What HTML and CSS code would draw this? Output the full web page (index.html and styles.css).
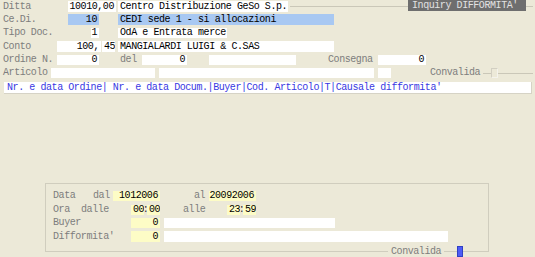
FILE: index.html
```html
<!DOCTYPE html>
<html>
<head>
<meta charset="utf-8">
<link rel="stylesheet" href="styles.css">
</head>
<body>
<div class="top">
  <div class="row r1">
    <span class="lbl w65">Ditta</span>
    <span class="fld num w48">10010,00</span>
    <span class="fld w170 ml2">Centro Distribuzione GeSo S.p.</span>
    <div class="frame">
      <span class="hline grow"></span>
      <span class="title">Inquiry DIFFORMITA'</span>
      <span class="hline w7"></span>
    </div>
  </div>
  <div class="row r2">
    <span class="lbl w65">Ce.Di.</span>
    <span class="fld blue num w31">10</span>
    <span class="fld blue w216 ml19">CEDI sede 1 - si allocazioni</span>
  </div>
  <div class="row r3">
    <span class="lbl w88">Tipo Doc.</span>
    <span class="fld num w8">1</span>
    <span class="fld w109 ml19">OdA e Entrata merce</span>
  </div>
  <div class="row r4">
    <span class="lbl w54">Conto</span>
    <span class="fld num w44">100,</span>
    <span class="fld w13 ml1">45</span>
    <span class="fld w216 ml3">MANGIALARDI LUIGI &amp; C.SAS</span>
  </div>
  <div class="row r5">
    <span class="lbl w54">Ordine N.</span>
    <span class="fld num w42">0</span>
    <span class="lbl w22 ml21">del</span>
    <span class="fld num w45">0</span>
    <span class="fld w87 ml22"></span>
    <span class="lbl w50 ml32">Consegna</span>
    <span class="fld num w48">0</span>
  </div>
  <div class="row r6">
    <span class="lbl w48">Articolo</span>
    <span class="fld w104"></span>
    <span class="fld w215 ml4"></span>
    <span class="fld w13 ml4"></span>
    <span class="lbl w53 ml39">Convalida</span>
    <span class="hline w8"></span>
    <span class="chk"></span>
    <span class="hline grow mr2"></span>
  </div>
  <div class="header">Nr. e data Ordine| Nr. e data Docum.|Buyer|Cod. Articolo|T|Causale difformita'</div>
</div>

<div class="group">
  <div class="row g1">
    <span class="lbl w40 ml7">Data</span>
    <span class="lbl w20">dal</span>
    <span class="fld yel num w47">1012006</span>
    <span class="lbl w15 ml34">al</span>
    <span class="fld yel num w47">20092006</span>
  </div>
  <div class="row g2">
    <span class="lbl w28 ml7">Ora</span>
    <span class="lbl w50">dalle</span>
    <span class="fld yel w13">00</span>
    <span class="colon">:</span>
    <span class="fld yel w13">00</span>
    <span class="lbl w44 ml23">alle</span>
    <span class="fld yel w13">23</span>
    <span class="colon">:</span>
    <span class="fld yel w13">59</span>
  </div>
  <div class="row g3">
    <span class="lbl w78 ml7">Buyer</span>
    <span class="fld yel num w29">0</span>
    <span class="fld w171 ml4"></span>
  </div>
  <div class="row g4">
    <span class="lbl w78 ml7">Difformita'</span>
    <span class="fld yel num w29">0</span>
    <span class="fld w284 ml4"></span>
  </div>
  <div class="legend">
    <span class="legend-text">Convalida</span>
    <span class="bluebox"></span>
  </div>
</div>
</body>
</html>
```

FILE: styles.css
```css
html, body {
  margin: 0;
  padding: 0;
  background: #ece9d8;
}
body {
  width: 535px;
  height: 257px;
  overflow: hidden;
  font-family: "Liberation Mono", "DejaVu Sans Mono", monospace;
  font-size: 10px;
  letter-spacing: -0.43px;
  color: #000;
}
.row {
  display: flex;
  align-items: stretch;
  height: 11px;
  line-height: 11px;
  white-space: nowrap;
}
.r1 { margin-top: 1px; }
.r2 { margin-top: 2px; }
.r3 { margin-top: 3px; height: 10px; line-height: 10px; }
.r4 { margin-top: 3px; }
.r5 { margin-top: 3px; height: 10px; line-height: 10px; }
.r6 { margin-top: 3px; height: 10px; line-height: 10px; }

.lbl {
  color: #7d7d7d;
  flex: none;
}
.row > .lbl:first-child:not([class*="ml"]) { margin-left: 3px; }
.fld {
  flex: none;
  background: #fff;
  overflow: hidden;
  padding-left: 2px;
  box-sizing: border-box;
}
.num {
  text-align: right;
  padding-left: 0;
  padding-right: 2px;
}
.blue { background: #a8c8f2; }
.yel { background: #fdfcc6; }

.frame {
  flex: 1;
  display: flex;
  align-items: center;
  margin-left: 2px;
  margin-right: 2px;
}
.hline {
  flex: none;
  height: 0;
  border-top: 1px solid #cac7b8;
  align-self: center;
}
.grow { flex: 1; }
.title {
  flex: none;
  width: 118px;
  height: 11px;
  margin-top: -2px;
  box-sizing: border-box;
  padding-left: 4px;
  line-height: 11px;
  background: #6e6e6e;
  color: #e2e2e2;
}
.chk {
  flex: none;
  width: 7px;
  box-sizing: border-box;
  border-left: 1px solid #d2cfc2;
  border-right: 1px solid #f4f3ec;
  border-top: 1px solid #d2cfc2;
  border-bottom: 1px solid #f4f3ec;
}
.header {
  margin: 4px 3px 0 4px;
  height: 12px;
  line-height: 11px;
  box-sizing: border-box;
  background: #fff;
  color: #3838e2;
  padding-left: 3px;
  border-bottom: 1px solid #d6d3c6;
  border-right: 1px solid #d6d3c6;
  white-space: nowrap;
}

.group {
  position: relative;
  margin: 89px 0 0 45px;
  width: 444px;
  height: 69px;
  box-sizing: border-box;
  border: 1px solid #d0cdbe;
}
.group .row { height: 10px; line-height: 10px; }
.g1 { margin-top: 7px; }
.g2 { margin-top: 4px; }
.g3 { margin-top: 3px; }
.g4 { margin-top: 3px; height: 11px !important; line-height: 11px !important; }
.colon {
  flex: none;
  width: 3px;
  text-align: center;
  overflow: visible;
  display: flex;
  justify-content: center;
  color: #333;
}
.legend {
  position: absolute;
  left: 342px;
  bottom: -6px;
  display: flex;
  align-items: center;
  height: 11px;
}
.legend-text {
  background: #ece9d8;
  color: #7d7d7d;
  padding: 0 3px;
  line-height: 11px;
}
.bluebox {
  margin-left: 13px;
  width: 6px;
  height: 11px;
  box-sizing: border-box;
  background: #4e5cf6;
  border: 1px solid #3040c4;
}

.ml1 { margin-left: 1px; }
.ml2 { margin-left: 2px; }
.ml3 { margin-left: 3px; }
.ml4 { margin-left: 4px; }
.ml7 { margin-left: 7px; }
.ml19 { margin-left: 19px; }
.ml21 { margin-left: 21px; }
.ml22 { margin-left: 22px; }
.ml23 { margin-left: 23px; }
.ml32 { margin-left: 32px; }
.ml34 { margin-left: 34px; }
.ml39 { margin-left: 39px; }
.mr2 { margin-right: 2px; }

.w7 { width: 7px; }
.w8 { width: 8px; }
.w13 { width: 13px; }
.w15 { width: 15px; }
.w20 { width: 20px; }
.w22 { width: 22px; }
.w28 { width: 28px; }
.w29 { width: 29px; }
.w31 { width: 31px; }
.w40 { width: 40px; }
.w42 { width: 42px; }
.w44 { width: 44px; }
.w45 { width: 45px; }
.w47 { width: 47px; }
.w48 { width: 48px; }
.w50 { width: 50px; }
.w53 { width: 53px; }
.w54 { width: 54px; }
.w65 { width: 65px; }
.w78 { width: 78px; }
.w87 { width: 87px; }
.w88 { width: 88px; }
.w104 { width: 104px; }
.w109 { width: 109px; }
.w170 { width: 170px; }
.w171 { width: 171px; }
.w215 { width: 215px; }
.w216 { width: 216px; }
.w284 { width: 284px; }
```
